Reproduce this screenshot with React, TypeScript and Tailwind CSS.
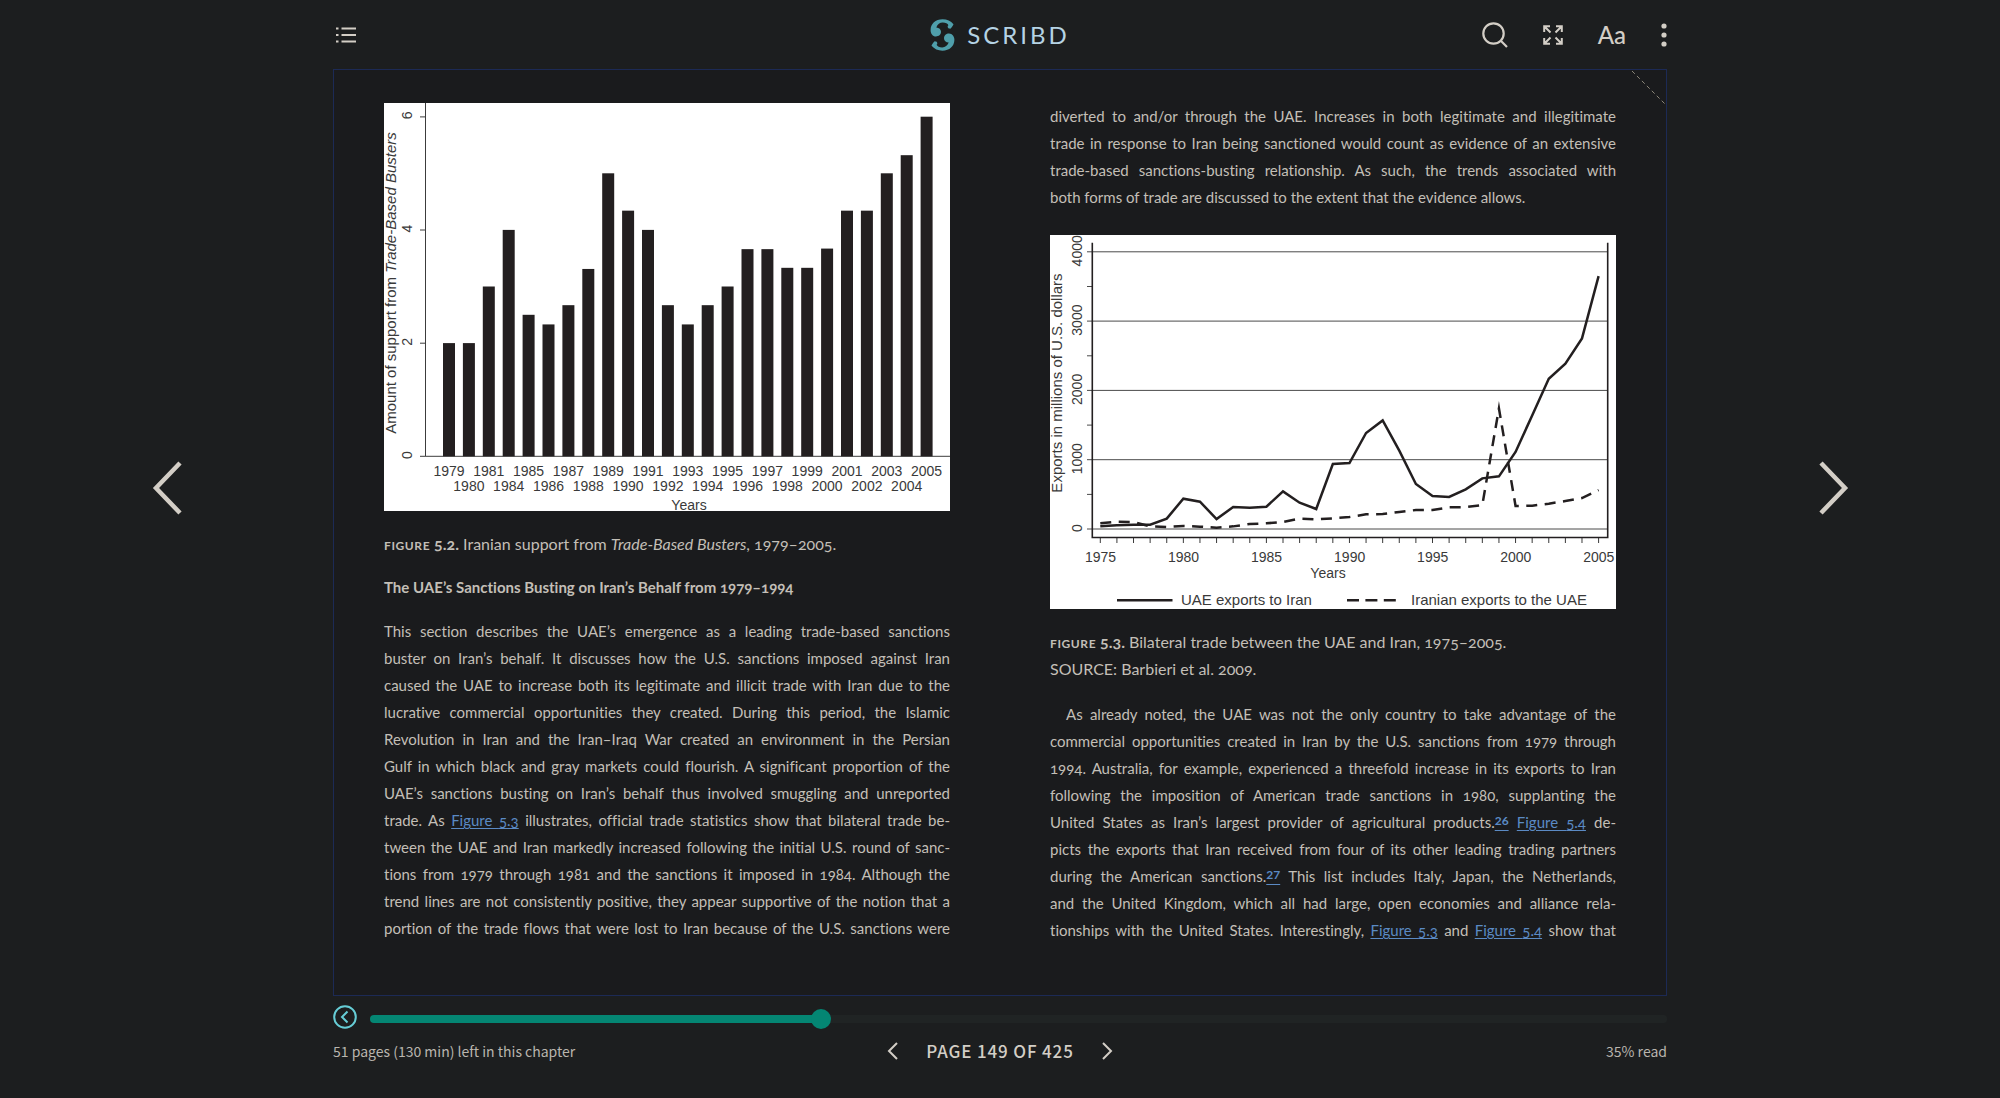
import { Fragment, useState } from 'react';
import type { CSSProperties, ReactNode } from 'react';

const SUPPORT: [number, number][] = [
  [1979, 2], [1980, 2], [1981, 3], [1984, 4], [1985, 2.5], [1986, 2.33], [1987, 2.67], [1988, 3.31], [1989, 5],
  [1990, 4.34], [1991, 4], [1992, 2.67], [1993, 2.33], [1994, 2.67], [1995, 3], [1996, 3.66], [1997, 3.66],
  [1998, 3.33], [1999, 3.33], [2000, 3.67], [2001, 4.34], [2002, 4.34], [2003, 5], [2004, 5.32], [2005, 6],
];

const UAE_EXPORTS = [
  40, 53, 63, 63, 150, 438, 394, 144, 317, 308, 322, 543, 380, 288, 938, 952, 1385, 1567, 1130, 649, 476, 462, 572,
  731, 760, 1111, 1639, 2168, 2385, 2750, 3649,
];

const IRAN_EXPORTS = [
  82, 106, 101, 38, 29, 43, 34, 19, 38, 72, 82, 101, 149, 139, 154, 173, 212, 216, 245, 274, 274, 312, 317, 346, 1740,
  332, 337, 365, 404, 447, 562,
];

const LINK = 'text-[#5b8ac4] underline underline-offset-2';

function FigLink({ n }: { n: string }) {
  return <a href={`#figure-${n}`} className={LINK}>Figure {n}</a>;
}

function Note({ n }: { n: number }) {
  return (
    <a href={`#note-${n}`} className="text-xs leading-none font-bold align-[3px] text-[#5b8ac4] underline underline-offset-[5px] lining-nums">
      {n}
    </a>
  );
}

const SECTION: ReactNode[] = [
  'This section describes the UAE’s emergence as a leading trade-based sanctions',
  'buster on Iran’s behalf. It discusses how the U.S. sanctions imposed against Iran',
  'caused the UAE to increase both its legitimate and illicit trade with Iran due to the',
  'lucrative commercial opportunities they created. During this period, the Islamic',
  'Revolution in Iran and the Iran–Iraq War created an environment in the Persian',
  'Gulf in which black and gray markets could flourish. A significant proportion of the',
  'UAE’s sanctions busting on Iran’s behalf thus involved smuggling and unreported',
  <>trade. As <FigLink n="5.3" /> illustrates, official trade statistics show that bilateral trade be-</>,
  'tween the UAE and Iran markedly increased following the initial U.S. round of sanc-',
  'tions from 1979 through 1981 and the sanctions it imposed in 1984. Although the',
  'trend lines are not consistently positive, they appear supportive of the notion that a',
  'portion of the trade flows that were lost to Iran because of the U.S. sanctions were',
];

const DIVERTED: ReactNode[] = [
  'diverted to and/or through the UAE. Increases in both legitimate and illegitimate',
  'trade in response to Iran being sanctioned would count as evidence of an extensive',
  'trade-based sanctions-busting relationship. As such, the trends associated with',
];

const PARTNERS: ReactNode[] = [
  'As already noted, the UAE was not the only country to take advantage of the',
  'commercial opportunities created in Iran by the U.S. sanctions from 1979 through',
  '1994. Australia, for example, experienced a threefold increase in its exports to Iran',
  'following the imposition of American trade sanctions in 1980, supplanting the',
  <>United States as Iran’s largest provider of agricultural products.<Note n={26} /> <FigLink n="5.4" /> de-</>,
  'picts the exports that Iran received from four of its other leading trading partners',
  <>during the American sanctions.<Note n={27} /> This list includes Italy, Japan, the Netherlands,</>,
  'and the United Kingdom, which all had large, open economies and alliance rela-',
  <>tionships with the United States. Interestingly, <FigLink n="5.3" /> and <FigLink n="5.4" /> show that</>,
];

function Lines({ lines }: { lines: ReactNode[] }) {
  return (
    <>
      {lines.map((line, i) => (
        <Fragment key={i}>
          {line}
          <br />
        </Fragment>
      ))}
    </>
  );
}

function SupportChart() {
  return (
    <svg viewBox="0 0 566 408" className="block w-full bg-white" fill="#3a3a3a" fontSize="14" textAnchor="middle" fontFamily="'Liberation Sans', Arial, sans-serif">
      <path d="M41.5 0V353M36 353.3H566M36 240.2H42M36 127H42M36 13.9H42" stroke="#3c3c3c" fill="none" />
      {[0, 2, 4, 6].map((v) => (
        <text key={v} transform={`translate(28 ${352 - v * 56.6}) rotate(-90)`}>{v}</text>
      ))}
      {SUPPORT.map(([year, value], i) => (
        <g key={year}>
          <rect x={59 + i * 19.9} y={353.3 - value * 56.6} width="12" height={value * 56.6} fill="#231f20" />
          <text x={65 + i * 19.9} y={i % 2 ? 388 : 373}>{year}</text>
        </g>
      ))}
      <text x="305" y="407">Years</text>
      <text transform="translate(12 180) rotate(-90)" fontSize="15">
        Amount of support from <tspan fontStyle="italic">Trade-Based Busters</tspan>
      </text>
    </svg>
  );
}

const toPoints = (data: number[]) => data.map((v, i) => `${50.3 + i * 16.61},${294 - v * 0.0693}`).join(' ');

function TradeChart() {
  return (
    <svg viewBox="0 0 566 374" className="block w-full bg-white" fill="#3a3a3a" fontSize="14" textAnchor="middle" fontFamily="'Liberation Sans', Arial, sans-serif">
      {[0, 1000, 2000, 3000, 4000].map((v) => (
        <g key={v}>
          <path d={`M37 ${294 - v * 0.0693}H558`} stroke="#4a4a4a" />
          <text transform={`translate(32 ${293 - v * 0.0693}) rotate(-90)`}>{v}</text>
        </g>
      ))}
      <path d="M37 259.4H42M37 190.1H42M37 120.8H42M37 51.5H42" stroke="#4a4a4a" />
      {UAE_EXPORTS.map((_, i) => (
        <path key={i} d={`M${50.3 + i * 16.61} 302V308`} stroke="#3a3a3a" />
      ))}
      <path d="M42.3 7.7V302.5H557.7V7.7" fill="none" stroke="#231f20" strokeWidth="1.6" />
      {[1975, 1980, 1985, 1990, 1995, 2000, 2005].map((y) => (
        <text key={y} x={50.5 + (y - 1975) * 16.61} y="327">{y}</text>
      ))}
      <polyline points={toPoints(IRAN_EXPORTS)} fill="none" stroke="#231f20" strokeWidth="2.5" strokeDasharray="11 7.5" strokeMiterlimit="20" />
      <polyline points={toPoints(UAE_EXPORTS)} fill="none" stroke="#231f20" strokeWidth="2.5" />
      <text x="278" y="343">Years</text>
      <text transform="translate(12 148) rotate(-90)" fontSize="15">Exports in millions of U.S. dollars</text>
      <path d="M67 365.3H122.5" stroke="#231f20" strokeWidth="2.5" />
      <path d="M297 365.3H346" stroke="#231f20" strokeWidth="2.5" strokeDasharray="12 6.4" />
      <text x="131" y="370" textAnchor="start" fontSize="15">UAE exports to Iran</text>
      <text x="361" y="370" textAnchor="start" fontSize="15">Iranian exports to the UAE</text>
    </svg>
  );
}

function Header() {
  return (
    <header className="mx-auto grid h-[69px] w-full max-w-[1334px] grid-cols-3 items-center text-[#d3cec6]">
      <button type="button" aria-label="Table of contents" className="ml-[3px] justify-self-start">
        <svg width="22" height="18" viewBox="0 0 22 18" fill="none" stroke="currentColor" strokeWidth="2">
          <path d="M0 2.5H2.5M0 9H2.5M0 15.5H2.5M5.5 2.5H20M5.5 9H20M5.5 15.5H20" />
        </svg>
      </button>
      <a href="#home" className="flex items-center gap-3 justify-self-center text-[#b5d3e4]">
        <svg width="25" height="32" viewBox="0 0 25 32" fill="#4f9fab" aria-hidden="true">
          <path d="M23.5 5.2C20.8 2 17 .3 12.6.3 5.4.3.6 4.8.6 11.2c0 3.2 2 6.300 5.4 6.300 2.7 0 5-1.900 5-4.700 0-2.500-1.900-4.200-4.700-4.400 1.200-3.100 3.400-4.800 6.500-4.800 2.700 0 5 1.100 5.600 2.700-.9.700-1 1.700-.1 3l2 .4c1.100-1 2.600-2.700 3.200-4.500z" />
          <path d="M1.500 26.800C4.200 30 8 31.700 12.400 31.700c7.200 0 12-4.500 12-10.900 0-3.200-2-6.300-5.400-6.300-2.700 0-5 1.900-5 4.700 0 2.500 1.900 4.200 4.700 4.400-1.200 3.100-3.400 4.800-6.500 4.800-2.700 0-5-1.100-5.600-2.700.9-.7 1-1.700.1-3l-2-.4c-1.100 1-2.600 2.700-3.200 4.500z" />
        </svg>
        <span className="font-['Lato',sans-serif] text-2xl leading-8 tracking-[3px]">SCRIBD</span>
      </a>
      <div className="flex items-center gap-[35px] justify-self-end">
        <button type="button" aria-label="Search">
          <svg width="26" height="26" viewBox="0 0 26 26" fill="none" stroke="currentColor" strokeWidth="2.2">
            <circle cx="11.5" cy="11.5" r="10.2" />
            <path d="M18.8 18.8L25 25" />
          </svg>
        </button>
        <button type="button" aria-label="Full screen">
          <svg width="20" height="20" viewBox="0 0 20 20" fill="none" stroke="currentColor" strokeWidth="2">
            <path d="M1.2 7V1.2H7M13 1.2H18.8V7M18.8 13V18.8H13M7 18.8H1.2V13M1.5 1.5L7.5 7.5M18.5 1.5L12.5 7.5M18.5 18.5L12.5 12.5M1.5 18.5L7.5 12.5" />
          </svg>
        </button>
        <button type="button" aria-label="Display settings" className="font-['Lato',sans-serif] text-2xl leading-6 font-medium">Aa</button>
        <button type="button" aria-label="More options">
          <svg width="6" height="24" viewBox="0 0 6 24" fill="currentColor">
            <circle cx="3" cy="3" r="2.6" />
            <circle cx="3" cy="12" r="2.6" />
            <circle cx="3" cy="21" r="2.6" />
          </svg>
        </button>
      </div>
    </header>
  );
}

function Footer() {
  const [progress, setProgress] = useState(34.5);
  return (
    <footer className="mx-auto w-full max-w-[1334px] pt-[9px] pb-[35px] font-['Noto_Sans_CJK_SC',sans-serif] text-[#b9b5ae]">
      <div className="flex items-end gap-[13px]">
        <button type="button" aria-label="Back to previous location">
          <svg width="24" height="24" viewBox="0 0 24 24" fill="none" stroke="#66cdd6" strokeWidth="2">
            <circle cx="12" cy="12" r="10.8" />
            <path d="M14.5 6.5L9 12L14.5 17.5" />
          </svg>
        </button>
        <input
          type="range"
          aria-label="Reading progress"
          min={0}
          max={100}
          step={0.5}
          value={progress}
          onChange={(e) => setProgress(Number(e.target.value))}
          className="h-5 min-w-0 flex-1 appearance-none bg-transparent [&::-webkit-slider-runnable-track]:h-2 [&::-webkit-slider-runnable-track]:rounded-full [&::-webkit-slider-runnable-track]:[background:linear-gradient(to_right,#048673_var(--fill),#202424_var(--fill))] [&::-webkit-slider-thumb]:-mt-[6px] [&::-webkit-slider-thumb]:size-5 [&::-webkit-slider-thumb]:appearance-none [&::-webkit-slider-thumb]:rounded-full [&::-webkit-slider-thumb]:bg-[#048673]"
          style={{ '--fill': `${progress}%` } as CSSProperties}
        />
      </div>
      <div className="mt-[10px] grid grid-cols-3 items-center text-sm leading-6">
        <span>51 pages (130 min) left in this chapter</span>
        <div className="flex items-center gap-7 justify-self-center text-[#d3cec6]">
          <button type="button" aria-label="Previous page">
            <svg width="11" height="18" viewBox="0 0 11 18" fill="none" stroke="currentColor" strokeWidth="2">
              <path d="M10 1L2 9L10 17" />
            </svg>
          </button>
          <span className="text-[17px] leading-6 font-medium tracking-wider">PAGE 149 OF 425</span>
          <button type="button" aria-label="Next page">
            <svg width="11" height="18" viewBox="0 0 11 18" fill="none" stroke="currentColor" strokeWidth="2">
              <path d="M1 1L9 9L1 17" />
            </svg>
          </button>
        </div>
        <span className="justify-self-end">{Math.round(progress)}% read</span>
      </div>
    </footer>
  );
}

export default function App() {
  return (
    <div className="flex min-h-screen flex-col bg-[#1c1e1f]">
      <Header />
      <div className="flex flex-1">
        <div className="flex flex-1 items-center justify-center pb-[90px]">
          <button type="button" aria-label="Turn back" className="text-[#d3cec6]">
            <svg width="30" height="54" viewBox="0 0 30 54" fill="none" stroke="currentColor" strokeWidth="4.5">
              <path d="M28 2L4 27L28 52" />
            </svg>
          </button>
        </div>
        <main className="relative grid w-full max-w-[1334px] grid-cols-2 border border-[#1c2a55] bg-[#1a1b1d] font-['Lato',sans-serif] text-[15px] leading-[27px] text-[#c3bfb7] oldstyle-nums [font-feature-settings:'liga'_0]">
          <svg className="absolute top-0 right-0" width="35" height="35" viewBox="0 0 35 35" aria-hidden="true">
            <path d="M1 1L34 34" stroke="#8a8578" strokeDasharray="4 3" />
          </svg>
          <article className="px-[50px] pt-[33px] whitespace-nowrap">
            <figure>
              <SupportChart />
              <figcaption className="mt-[19px] text-base leading-[27px]">
                <b><span className="text-xs tracking-wider">FIGURE</span> 5.2.</b> Iranian support from <i>Trade-Based Busters</i>, 1979–2005.
              </figcaption>
            </figure>
            <h2 className="mt-[17px] font-bold">The UAE’s Sanctions Busting on Iran’s Behalf from 1979–1994</h2>
            <p className="mt-[17px] text-justify [text-align-last:justify]">
              <Lines lines={SECTION} />
            </p>
          </article>
          <article className="px-[50px] pt-[33px] whitespace-nowrap">
            <p className="text-justify [text-align-last:justify]">
              <Lines lines={DIVERTED} />
            </p>
            <p>both forms of trade are discussed to the extent that the evidence allows.</p>
            <figure className="mt-6">
              <TradeChart />
              <figcaption className="mt-[19px] text-base leading-[27px]">
                <b><span className="text-xs tracking-wider">FIGURE</span> 5.3.</b> Bilateral trade between the UAE and Iran, 1975–2005.
                <br />
                SOURCE: Barbieri et al. 2009.
              </figcaption>
            </figure>
            <p className="mt-[19px] indent-4 text-justify [text-align-last:justify]">
              <Lines lines={PARTNERS} />
            </p>
          </article>
        </main>
        <div className="flex flex-1 items-center justify-center pb-[90px]">
          <button type="button" aria-label="Turn forward" className="text-[#d3cec6]">
            <svg width="30" height="54" viewBox="0 0 30 54" fill="none" stroke="currentColor" strokeWidth="4.5">
              <path d="M2 2L26 27L2 52" />
            </svg>
          </button>
        </div>
      </div>
      <Footer />
    </div>
  );
}
